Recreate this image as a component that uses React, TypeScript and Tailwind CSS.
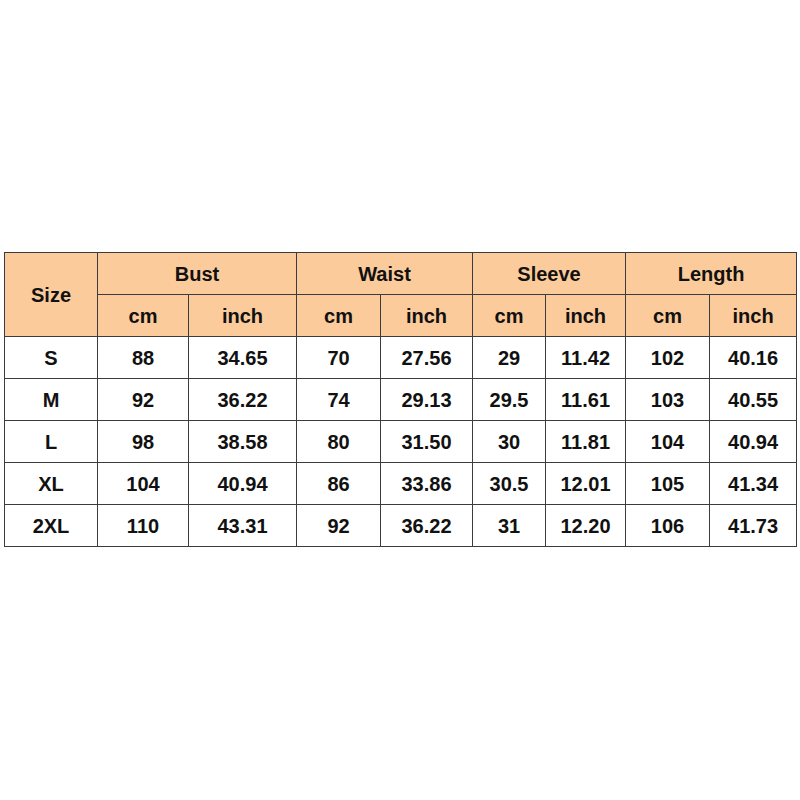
const rows = [
  ['S', '88', '34.65', '70', '27.56', '29', '11.42', '102', '40.16'],
  ['M', '92', '36.22', '74', '29.13', '29.5', '11.61', '103', '40.55'],
  ['L', '98', '38.58', '80', '31.50', '30', '11.81', '104', '40.94'],
  ['XL', '104', '40.94', '86', '33.86', '30.5', '12.01', '105', '41.34'],
  ['2XL', '110', '43.31', '92', '36.22', '31', '12.20', '106', '41.73'],
];

const widths = [93, 91, 108, 84, 92, 73, 80, 84, 87];
const groups = ['Bust', 'Waist', 'Sleeve', 'Length'];

const cell = 'border border-[#3c3c3c] text-center h-[42px] p-0';

export default function App() {
  return (
    <div className="w-[800px] h-[800px] bg-white pt-[252px] px-[4px] font-['Liberation_Sans',Arial,sans-serif] font-bold text-[20px] text-[#111]">
      <table className="table-fixed border-collapse w-[793px]">
        <colgroup>
          {widths.map((w, i) => (
            <col key={i} style={{ width: w }} />
          ))}
        </colgroup>
        <thead className="bg-[#fccb9b]">
          <tr>
            <th rowSpan={2} className={cell}>Size</th>
            {groups.map((g) => (
              <th key={g} colSpan={2} className={cell}>{g}</th>
            ))}
          </tr>
          <tr>
            {groups.map((g) => [
              <th key={g + 'cm'} className={cell}>cm</th>,
              <th key={g + 'in'} className={cell}>inch</th>,
            ])}
          </tr>
        </thead>
        <tbody>
          {rows.map((r) => (
            <tr key={r[0]}>
              {r.map((v, i) => (
                <td key={i} className={cell}>{v}</td>
              ))}
            </tr>
          ))}
        </tbody>
      </table>
    </div>
  );
}
